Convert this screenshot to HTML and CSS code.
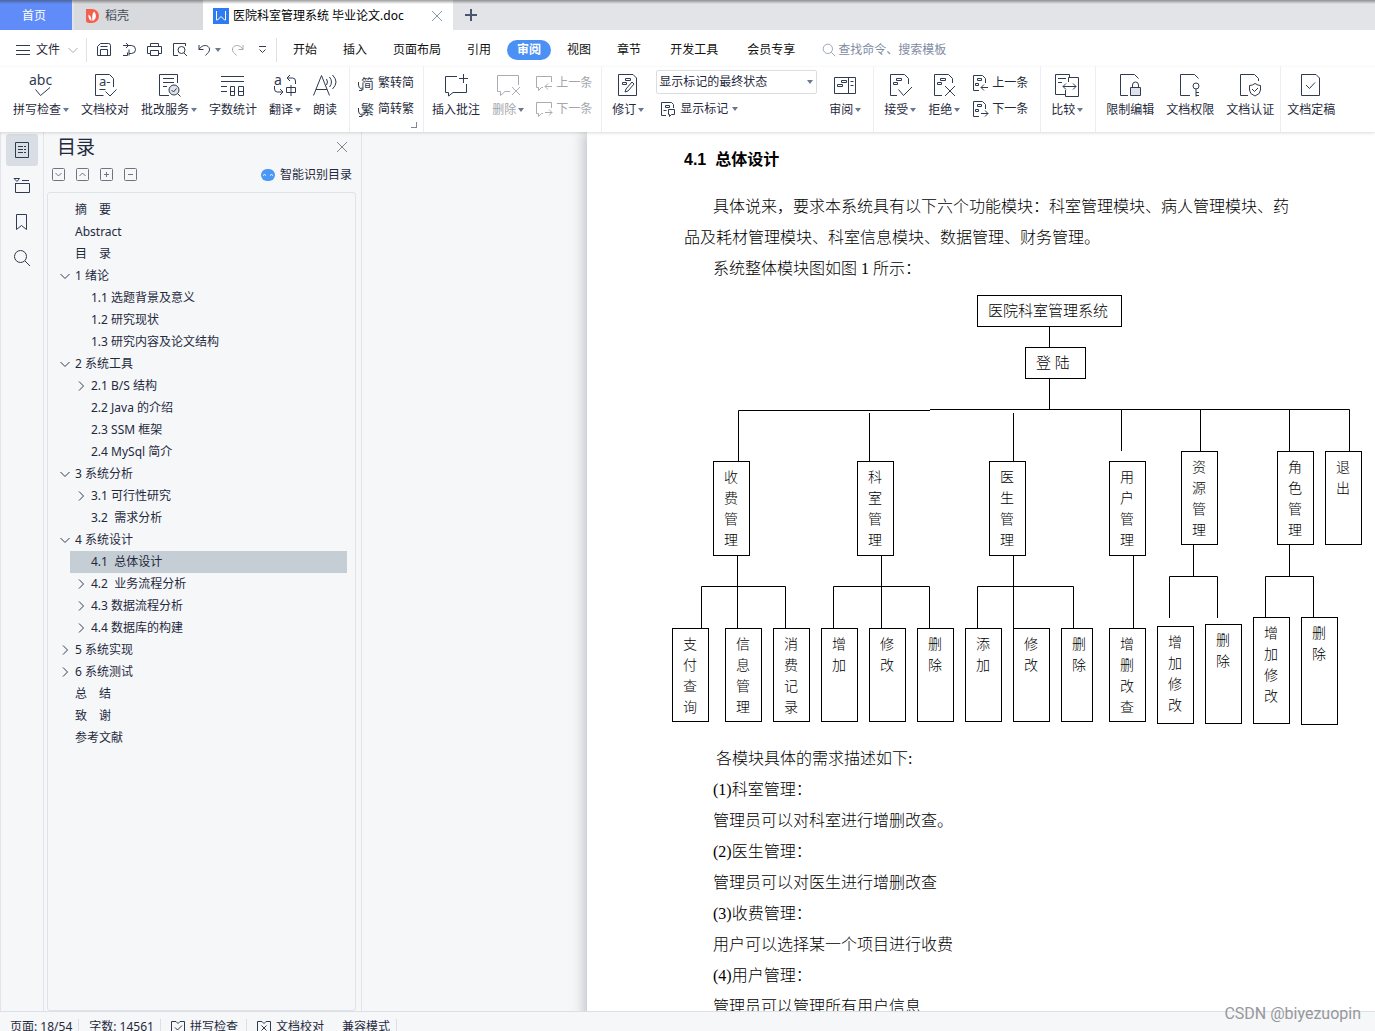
FILE: index.html
```html
<!DOCTYPE html>
<html lang="zh-CN">
<head>
<meta charset="utf-8">
<title>医院科室管理系统 毕业论文.doc</title>
<link rel="stylesheet" href="styles.css">
</head>
<body>
<svg class="defs" aria-hidden="true">
  <symbol id="caret" viewBox="0 0 6 4"><path class="solid" d="M0 0h6L3 4z"/></symbol>
  <symbol id="down" viewBox="0 0 14 14"><path d="M2.500 5l4.500 4.500L11.500 5"/></symbol>
  <symbol id="right" viewBox="0 0 14 14"><path d="M5 2.500L9.500 7 5 11.500"/></symbol>
  <symbol id="cross" viewBox="0 0 12 12"><path d="M1 1l10 10M11 1L1 11"/></symbol>
  <symbol id="magnifier" viewBox="0 0 18 18"><circle cx="7.500" cy="7.500" r="6"/><path d="M12 12l5 5"/></symbol>
</svg>

<header>
  <nav class="tabs" aria-label="文档标签">
    <a class="tab home" href="#">首页</a>
    <a class="tab docer" href="#">
      <svg width="14" height="16" viewBox="0 0 14 16"><path class="red" d="M0 1h6a7 7 0 0 1 0 14H3a3 3 0 0 1-3-3z"/><path class="white" d="M5.500 13C3.500 12 2 10 2.500 6.500 4.500 7.500 5.500 10 5.500 13zM6.500 13C6 9 6 6 8 3.500c3 3 2.500 8-1.500 9.500z"/></svg>
      稻壳</a>
    <a class="tab current" href="#">
      <svg width="16" height="16" viewBox="0 0 16 16"><path class="blue" d="M0 0h16v16H0z"/><path class="w" d="M3.500 3v9h1L8 8.500l3.500 3.500h1V3"/></svg>
      <span>医院科室管理系统 毕业论文.doc</span>
      <svg class="tab-close" width="12" height="12"><use href="#cross"/></svg></a>
    <button class="add" aria-label="新建标签"><svg width="12" height="12" viewBox="0 0 12 12"><path d="M6 0v12M0 6h12"/></svg></button>
  </nav>

  <div class="menu">
    <button class="file"><svg width="14" height="12" viewBox="0 0 14 12"><path d="M0 1.500h14M0 6.500h14M0 10.500h14"/></svg>文件<svg class="faint" width="14" height="14"><use href="#down"/></svg></button>
    <div class="quick">
      <button aria-label="保存"><svg width="15" height="15" viewBox="0 0 15 15"><path d="M.5 4.500l3-3h8a2 2 0 0 1 2 2v10H.5zM3.500 13.500V7.500h7v6M3.500 4.500h7"/></svg></button>
      <button aria-label="输出为PDF"><svg width="15" height="15" viewBox="0 0 15 15"><path d="M1 3.500h8.500a4 4 0 0 1 0 8H7M7 13.500v-6M1 13.500h4.500v-3M4 1l2.500 2.500L4 6"/></svg></button>
      <button aria-label="打印"><svg width="15" height="15" viewBox="0 0 15 15"><path d="M3.500 4V1.500h8V4M3 11.500H.5v-7h14v7H12M3.500 8.500h8v5h-8z"/></svg></button>
      <button aria-label="打印预览"><svg width="16" height="15" viewBox="0 0 16 15"><path d="M6 13.500H1.500v-12h12V4M12 11l3 3"/><circle cx="9.500" cy="8" r="3.500"/></svg></button>
      <button class="undo" aria-label="撤销"><svg width="13" height="14" viewBox="0 0 13 14"><path d="M1 2v4.500h4.500M1 6.500C4 1 11 1.500 11.500 6c.3 3-2 4-4 6.500"/></svg><svg class="caret" width="6" height="4"><use href="#caret"/></svg></button>
      <button class="faint" aria-label="恢复"><svg width="13" height="14" viewBox="0 0 13 14"><path d="M12 2v4.500H7.500M12 6.500C9 1 2 1.500 1.500 6c-.3 3 2 4 4 6.500"/></svg></button>
      <button class="more" aria-label="自定义"><svg width="9" height="9" viewBox="0 0 9 9"><path d="M1 1.500h7M1.500 4.500l3 3 3-3"/></svg></button>
    </div>
    <nav class="sections" aria-label="功能区">
      <a href="#">开始</a><a href="#">插入</a><a href="#">页面布局</a><a href="#">引用</a><a class="active" href="#">审阅</a><a href="#">视图</a><a href="#">章节</a><a class="wide" href="#">开发工具</a><a class="wide" href="#">会员专享</a>
    </nav>
    <label class="search"><svg width="14" height="14"><use href="#magnifier"/></svg><input type="text" placeholder="查找命令、搜索模板" aria-label="查找命令、搜索模板"></label>
  </div>

  <div class="ribbon">
    <div class="group">
      <button class="tool"><svg viewBox="0 0 24 24"><text class="glyph abc" x="0" y="12">abc</text><path d="M6.500 16.500l5 6 9.500-8"/></svg><span>拼写检查<svg class="caret"><use href="#caret"/></svg></span></button>
      <button class="tool"><svg viewBox="0 0 24 24"><path d="M10.500 22.500h-8v-21h14l4 4V14M6.500 16.500h6M12.500 18.500L17 23l6.500-6.500"/><text class="glyph" x="6" y="13">a-</text></svg><span>文档校对</span></button>
      <button class="tool"><svg viewBox="0 0 24 24"><path d="M12 22.500H2.500v-21h18V10M6 5.500h11M6 9.500h11M6 13.500h4M20.500 20.500l3 3"/><circle class="tint" cx="17" cy="17" r="5"/><path d="M14.500 17l2 2 3-3.500"/></svg><span>批改服务<svg class="caret"><use href="#caret"/></svg></span></button>
      <button class="tool"><svg viewBox="0 0 24 24"><path d="M0 3.500h23M0 8.500h23M0 13.500h6M0 18.500h6M9.500 13.500h4v9h-4zM17.500 13.500h5v9h-5zM9.500 18.500h4M17.500 18.500h5"/></svg><span>字数统计</span></button>
      <button class="tool"><svg viewBox="0 0 24 24"><text class="glyph abc" x="1" y="12">a</text><path d="M22.500 11V8a3 3 0 0 0-3-3H14M17 2l-3 3 3 3M1.500 13v3a3 3 0 0 0 3 3H10M7 16l3 3-3 3M13.500 14.500h9v5h-9zM18 12v11"/></svg><span>翻译<svg class="caret"><use href="#caret"/></svg></span></button>
      <button class="tool"><svg viewBox="0 0 24 24"><path d="M.5 22.500l8-20 8 20M3 16.500h11M13.500 6q2 3 0 6M16.500 4q4 5 0 10M19.500 2q7 7 0 14"/></svg><span>朗读</span></button>
    </div>
    <div class="group tight corner">
      <div class="stack">
        <button class="small"><svg viewBox="0 0 16 16"><text class="glyph" x="3" y="13">简</text><path d="M.5 7v3q0 3 3 4M1 15.500h3v-3"/></svg>繁转简</button>
        <button class="small"><svg viewBox="0 0 16 16"><text class="glyph" x="3" y="13">繁</text><path d="M.5 7v3q0 3 3 4M1 15.500h3v-3"/></svg>简转繁</button>
      </div>
    </div>
    <div class="group tight">
      <button class="tool"><svg viewBox="0 0 24 24"><path d="M13 3.500H1.500v16h3v3.500l4.500-3.500h13.500V11M19.500 1v9M15 5.500h9"/></svg><span>插入批注</span></button>
      <button class="tool off" disabled><svg viewBox="0 0 24 24"><path d="M22.500 12V2.500h-21v16h3v4l4.500-4h5M16 14l8 8M24 14l-8 8"/></svg><span>删除<svg class="caret"><use href="#caret"/></svg></span></button>
      <div class="stack">
        <button class="small off" disabled><svg viewBox="0 0 16 16"><path d="M15.500 7V1.500H.5v11h2v3l3-3H7M16 11.500H9M12 8.500l-3 3 3 3"/></svg>上一条</button>
        <button class="small off" disabled><svg viewBox="0 0 16 16"><path d="M15.500 7V1.500H.5v11h2v3l3-3H7M9 11.500h7M13 8.500l3 3-3 3"/></svg>下一条</button>
      </div>
    </div>
    <div class="group">
      <button class="tool"><svg viewBox="0 0 24 24"><path d="M2.500 1.500H17L20.500 5v17.500h-18zM9.500 5.500h5v2h-5zM6.500 9.500h4v2h-4zM9 19l1-3 6-7 2 2-6 7z"/></svg><span>修订<svg class="caret"><use href="#caret"/></svg></span></button>
      <div class="stack pick">
        <div class="combo"><select aria-label="显示状态"><option>显示标记的最终状态</option></select><svg class="caret"><use href="#caret"/></svg></div>
        <button class="small"><svg viewBox="0 0 16 16"><path d="M6 14.500H1.500v-13h10l2 2V7M5.500 4.500h4v2h-4zM3.500 9.500h3M8.500 8.500h6v5h-3l-2 2v-2h-1z"/></svg>显示标记<svg class="caret"><use href="#caret"/></svg></button>
      </div>
      <button class="tool"><svg viewBox="0 0 24 24"><path d="M1.500 4.500h21v16h-21zM15.500 4.500v16M17.500 8.500h3M17.500 12.500h3M8.500 7.500h5v2h-5zM4.500 11.500h5v2h-5z"/></svg><span>审阅<svg class="caret"><use href="#caret"/></svg></span></button>
    </div>
    <div class="group">
      <button class="tool"><svg viewBox="0 0 24 24"><path d="M9 22.500H2.500v-21h14l4 4V11M8.500 5.500h5v2h-5zM5.500 9.500h4v2h-4zM10.500 16.500l5 6L24 14"/></svg><span>接受<svg class="caret"><use href="#caret"/></svg></span></button>
      <button class="tool"><svg viewBox="0 0 24 24"><path d="M10 22.500H2.500v-21h14l4 4V10M8.500 5.500h5v2h-5zM5.500 9.500h4v2h-4zM13 13l10 10M23 13L13 23"/></svg><span>拒绝<svg class="caret"><use href="#caret"/></svg></span></button>
      <div class="stack">
        <button class="small"><svg viewBox="0 0 16 16"><path d="M7 15.500H1.500V.5h9l3 3V8M5.500 3.500h4v2h-4zM3.500 8.500h3v2h-3zM16 12.500H9M12 9.500l-3 3 3 3"/></svg>上一条</button>
        <button class="small"><svg viewBox="0 0 16 16"><path d="M7 15.500H1.500V.5h9l3 3V8M5.500 3.500h4v2h-4zM3.500 8.500h3v2h-3zM9 12.500h7M13 9.500l3 3-3 3"/></svg>下一条</button>
      </div>
    </div>
    <div class="group">
      <button class="tool"><svg viewBox="0 0 24 24"><path d="M14.500 4V1.500H.5v20h10M10.500 17v6.500h13v-19h-10V9M3 5.500h8M3 9.500h4M8 13.500h13M11 10.500l-3 3 3 3M18 10.500l3 3-3 3"/></svg><span>比较<svg class="caret"><use href="#caret"/></svg></span></button>
    </div>
    <div class="group final">
      <button class="tool"><svg viewBox="0 0 24 24"><path d="M10 22.500H2.500v-21h14l4 4"/><path class="tint" d="M12.500 14.500h10v8h-10z"/><path d="M14.500 14.500V12a3 3 0 0 1 6 0v2.500"/></svg><span>限制编辑</span></button>
      <button class="tool"><svg viewBox="0 0 24 24"><path d="M12 22.500H2.500v-21h14l4 4M18 16v7.500M18 19.500h3M18 22.500h3"/><circle cx="18" cy="13" r="3"/></svg><span>文档权限</span></button>
      <button class="tool"><svg viewBox="0 0 24 24"><path d="M10 22.500H2.500v-21h14l4 4V8M17 10.500q3 2 5.500 2V17q0 4-5.500 6-5.500-2-5.500-6v-4.500q3 0 5.500-2zM14 16l2.500 2.500L20 15"/></svg><span>文档认证</span></button>
    </div>
    <div class="group final">
      <button class="tool"><svg viewBox="0 0 24 24"><path d="M2.500 1.500H17L20.500 5v17.500h-18zM7 12l3.500 3.500L16 9.500"/></svg><span>文档定稿</span></button>
    </div>
  </div>
</header>

<main>
  <nav class="rail" aria-label="侧边栏">
    <button class="on" aria-label="目录"><svg viewBox="0 0 18 18"><path d="M2.500 1.500h13v15h-13zM5 5.500h5M11 5.500h2M5 8.500h5M11 8.500h2M5 11.500h5M11 11.500h2"/></svg></button>
    <button aria-label="章节"><svg viewBox="0 0 18 18"><path d="M2.500 6v9.500h14v-9h-14M9 3.500h7M1 1.500h5.500L4 4.500z"/></svg></button>
    <button aria-label="书签"><svg viewBox="0 0 18 18"><path d="M3.500 1.500h10v15l-5-4-5 4z"/></svg></button>
    <button aria-label="查找"><svg viewBox="0 0 18 18"><use href="#magnifier"/></svg></button>
  </nav>

  <aside>
    <div class="panel-head"><h2>目录</h2><button aria-label="关闭"><svg width="12" height="12"><use href="#cross"/></svg></button></div>
    <div class="panel-tools">
      <button aria-label="全部折叠"><svg viewBox="0 0 14 14"><rect x=".5" y=".5" width="12" height="12" rx="1"/><path d="M3.500 5l3 3 3-3"/></svg></button>
      <button aria-label="全部展开"><svg viewBox="0 0 14 14"><rect x=".5" y=".5" width="12" height="12" rx="1"/><path d="M3.500 8l3-3 3 3"/></svg></button>
      <button aria-label="增加级别"><svg viewBox="0 0 14 14"><rect x=".5" y=".5" width="12" height="12" rx="1"/><path d="M4 6.500h5M6.500 4v5"/></svg></button>
      <button aria-label="减少级别"><svg viewBox="0 0 14 14"><rect x=".5" y=".5" width="12" height="12" rx="1"/><path d="M4 6.500h5"/></svg></button>
      <a class="smart" href="#"><svg viewBox="0 0 14 12"><rect class="bot" width="14" height="12" rx="6"/><path class="w" d="M2 6.500q1.500-2 3 0M9 6.500q1.500-2 3 0"/></svg>智能识别目录</a>
    </div>
    <ul class="tree">
      <li><a href="#"><i></i>摘　要</a></li>
      <li><a href="#"><i></i>Abstract</a></li>
      <li><a href="#"><i></i>目　录</a></li>
      <li><a href="#"><svg><use href="#down"/></svg>1 绪论</a>
        <ul>
          <li><a href="#"><i></i>1.1 选题背景及意义</a></li>
          <li><a href="#"><i></i>1.2 研究现状</a></li>
          <li><a href="#"><i></i>1.3 研究内容及论文结构</a></li>
        </ul></li>
      <li><a href="#"><svg><use href="#down"/></svg>2 系统工具</a>
        <ul>
          <li><a href="#"><svg><use href="#right"/></svg>2.1 B/S 结构</a></li>
          <li><a href="#"><i></i>2.2 Java 的介绍</a></li>
          <li><a href="#"><i></i>2.3 SSM 框架</a></li>
          <li><a href="#"><i></i>2.4 MySql 简介</a></li>
        </ul></li>
      <li><a href="#"><svg><use href="#down"/></svg>3 系统分析</a>
        <ul>
          <li><a href="#"><svg><use href="#right"/></svg>3.1 可行性研究</a></li>
          <li><a href="#"><i></i>3.2&nbsp; 需求分析</a></li>
        </ul></li>
      <li><a href="#"><svg><use href="#down"/></svg>4 系统设计</a>
        <ul>
          <li><a class="selected" href="#"><i></i>4.1&nbsp; 总体设计</a></li>
          <li><a href="#"><svg><use href="#right"/></svg>4.2&nbsp; 业务流程分析</a></li>
          <li><a href="#"><svg><use href="#right"/></svg>4.3 数据流程分析</a></li>
          <li><a href="#"><svg><use href="#right"/></svg>4.4 数据库的构建</a></li>
        </ul></li>
      <li><a href="#"><svg><use href="#right"/></svg>5 系统实现</a></li>
      <li><a href="#"><svg><use href="#right"/></svg>6 系统测试</a></li>
      <li><a href="#"><i></i>总　结</a></li>
      <li><a href="#"><i></i>致　谢</a></li>
      <li><a href="#"><i></i>参考文献</a></li>
    </ul>
  </aside>

  <div class="desk">
    <article>
      <h1>4.1&nbsp; 总体设计</h1>
      <p>具体说来，要求本系统具有以下六个功能模块：科室管理模块、病人管理模块、药品及耗材管理模块、科室信息模块、数据管理、财务管理。</p>
      <p>系统整体模块图如图 1 所示：</p>
      <div class="diagram">
        <svg width="700" height="430" viewBox="0 0 700 430">
          <path d="M377.500 32v20M377.500 84v30M66.500 166v-50.500H258M258 114.500h419.500V156M197.500 118v48M341.500 118v48M449.500 114v42M528.500 114v42M617.500 114v42"/>
          <path d="M65.500 261v72M29.500 333v-41.500h84V333M209.500 261v72M161.500 333v-41.500h96V333M341.500 261v72M305.500 333v-41.500h96V333M461.500 261v72M521.500 250v31M497.500 323v-41.500h48V323M617.500 250v31M593.500 322v-40.500h48V322"/>
        </svg>
        <div class="node root">医院科室管理系统</div>
        <div class="node login">登 陆</div>
        <div class="node mid m1">收费管理</div>
        <div class="node mid m2">科室管理</div>
        <div class="node mid m3">医生管理</div>
        <div class="node mid m4">用户管理</div>
        <div class="node mid high m5">资源管理</div>
        <div class="node mid high m6">角色管理</div>
        <div class="node mid high m7">退出</div>
        <div class="node leaf l1">支付查询</div>
        <div class="node leaf l2">信息管理</div>
        <div class="node leaf l3">消费记录</div>
        <div class="node leaf l4">增加</div>
        <div class="node leaf l5">修改</div>
        <div class="node leaf l6">删除</div>
        <div class="node leaf l7">添加</div>
        <div class="node leaf l8">修改</div>
        <div class="node leaf l9">删除</div>
        <div class="node leaf l10">增删改查</div>
        <div class="node leaf l11">增加修改</div>
        <div class="node leaf l12">删除</div>
        <div class="node leaf l13">增加修改</div>
        <div class="node leaf l14">删除</div>
      </div>
      <p class="lead">各模块具体的需求描述如下:</p>
      <p>(1)科室管理：</p>
      <p>管理员可以对科室进行增删改查。</p>
      <p>(2)医生管理：</p>
      <p>管理员可以对医生进行增删改查</p>
      <p>(3)收费管理：</p>
      <p>用户可以选择某一个项目进行收费</p>
      <p>(4)用户管理：</p>
      <p>管理员可以管理所有用户信息</p>
    </article>
  </div>
</main>

<footer>
  <span>页面: 18/54</span>
  <span>字数: 14561</span>
  <button><svg viewBox="0 0 14 14"><path d="M5 1.500H.5v12h13v-12H9L7 3.500zM4 7.500l2.500 2.500L11 5.500"/></svg>拼写检查</button>
  <button class="open"><svg viewBox="0 0 14 14"><path d="M5 1.500H.5v12h13v-12H9L7 3.500zM4.500 5.500l5 5M9.500 5.500l-5 5"/></svg>文档校对</button>
  <span>兼容模式</span>
</footer>
<div class="watermark">CSDN @biyezuopin</div>
</body>
</html>
```
FILE: styles.css
```css
* { box-sizing: border-box; }

body {
  margin: 0;
  height: 100vh;
  display: flex;
  flex-direction: column;
  overflow: hidden;
  background: #f6f7f9;
  color: #1f2a3d;
  font: 12px/16px "Noto Sans", "Noto Sans CJK SC", sans-serif;
}

button, input, select {
  margin: 0;
  padding: 0;
  border: 0;
  background: none;
  color: inherit;
  font: inherit;
}

a { color: inherit; text-decoration: none; }
ul { margin: 0; padding: 0; list-style: none; }
svg { flex: none; display: block; fill: none; stroke: #2f3b50; stroke-width: 1; }
.defs { position: absolute; width: 0; height: 0; }
.solid { fill: #6b7890; stroke: none; }
.caret { width: 6px; height: 4px; }
.faint svg, svg.faint { stroke: #a5abb5; }
.tint { fill: #dfe3e8; }
.w { stroke: #fff; }
.white { fill: #fff; stroke: none; }

/* Document tabs */
.tabs {
  position: relative;
  display: flex;
  height: 30px;
  background: #e2e4e8;
}
.tabs::after {
  content: "";
  position: absolute;
  inset: 0 0 auto;
  height: 4px;
  background: linear-gradient(rgba(60, 60, 60, .5), rgba(60, 60, 60, 0));
}
.tab { display: flex; align-items: center; padding-top: 2px; }
.home {
  width: 72px;
  margin-right: 2px;
  padding-right: 4px;
  justify-content: center;
  background: #5f8cf9;
  color: #fff;
}
.docer {
  width: 129px;
  padding-left: 12px;
  gap: 5px;
  background: #d9dadd;
  color: #454c58;
}
.red { fill: #f4604f; stroke: none; }
.current {
  width: 250px;
  padding: 2px 10px 0;
  gap: 4px;
  background: #fff;
  color: #000;
}
.blue { fill: #2f7cf0; stroke: none; }
.tab-close { margin-left: auto; stroke: #8c98ab; }
.add { width: 36px; display: grid; place-items: center; }
.add svg { stroke: #4a5670; stroke-width: 2; }

/* Menu row */
.menu { display: flex; align-items: center; height: 37px; padding-top: 2px; background: #fff; }
.file {
  display: flex;
  align-items: center;
  gap: 6px;
  height: 24px;
  padding: 0 6px 0 16px;
  border-right: 1px solid #dfe1e5;
}
.quick {
  display: flex;
  align-items: center;
  gap: 10px;
  height: 24px;
  padding: 0 9px 0 10px;
  border-right: 1px solid #dfe1e5;
}
.undo { display: flex; align-items: center; gap: 4px; }
.more { margin-left: 4px; }
.sections { display: flex; gap: 6px; margin-left: 6px; }
.sections a { padding: 2px 10px; border-radius: 10px; color: #111; }
.sections .active { background: #4a90f5; color: #fff; font-weight: bold; }
.sections .wide { margin-left: 3px; }
.search { display: flex; align-items: center; gap: 2px; margin-left: 17px; }
.search svg { stroke: #8290a8; }
.search input { width: 130px; }
.search input::placeholder { color: #7f8ba3; opacity: 1; }

/* Ribbon */
.ribbon {
  display: flex;
  height: 65px;
  padding-left: 3px;
  background: #fff;
  box-shadow: 0 1px 3px rgba(0, 0, 0, .15);
  position: relative;
}
.group {
  display: flex;
  gap: 12px;
  padding: 0 12px 0 10px;
  border-right: 1px solid #eceef1;
}
.group.tight { padding: 0 9px 0 8px; }
.group.final { padding-right: 6px; }
.group.final + .final { padding-left: 6px; border: 0; }
.corner { position: relative; }
.corner::after {
  content: "";
  position: absolute;
  right: 6px;
  bottom: 4px;
  width: 5px;
  height: 5px;
  border: solid #7f8797;
  border-width: 0 1px 1px 0;
}
.tool {
  display: flex;
  flex-direction: column;
  align-items: center;
  gap: 5px;
  padding-top: 6px;
  white-space: nowrap;
}
.tool > svg { width: 24px; height: 24px; overflow: visible; }
.tool span { display: flex; align-items: center; gap: 2px; }
.glyph { fill: #2f3b50; stroke: none; font-size: 13px; }
.abc { font-size: 14px; }
.stack { display: flex; flex-direction: column; gap: 8px; padding-top: 7px; }
.stack.pick { gap: 6px; padding-top: 3px; }
.small { display: flex; align-items: center; gap: 4px; height: 18px; white-space: nowrap; }
.small > svg:first-child { width: 16px; height: 16px; overflow: visible; }
.pick .small { padding-left: 4px; }
.off { color: #a3a6ac; }
.off svg { stroke: #a9acb2; }
.combo { position: relative; width: 161px; }
.combo select {
  width: 100%;
  height: 24px;
  padding-left: 2px;
  border: 1px solid #dadde2;
  border-radius: 2px;
  appearance: none;
}
.combo .caret { position: absolute; right: 4px; top: 10px; pointer-events: none; }

/* Work area */
main { flex: 1; min-height: 0; display: flex; }
.rail {
  display: flex;
  flex-direction: column;
  gap: 4px;
  width: 44px;
  padding: 2px 5px;
  border: solid #e2e4e9;
  border-width: 0 1px;
}
.rail button { width: 32px; height: 32px; display: grid; place-items: center; border-radius: 3px; }
.rail svg { width: 18px; height: 18px; }
.rail .on { background: #d9dde4; }

aside {
  display: flex;
  flex-direction: column;
  width: 318px;
  padding: 0 5px 0 3px;
  border-right: 1px solid #e2e4e9;
}
.panel-head { display: flex; justify-content: space-between; align-items: center; height: 30px; padding: 0 8px 0 10px; }
.panel-head h2 { margin: 0; font-size: 19px; line-height: 28px; font-weight: normal; }
.panel-head svg { stroke: #7e8591; }
.panel-tools { display: flex; align-items: center; gap: 10px; height: 24px; margin-bottom: 6px; padding: 1px 4px 0 5px; }
.panel-tools svg { width: 14px; height: 14px; stroke: #6f7580; }
.smart { display: flex; align-items: center; gap: 5px; margin-left: auto; }
.smart .bot { fill: #4a97f5; stroke: none; }
.tree {
  flex: 1;
  padding: 6px 8px 0 6px;
  border: 1px solid #dfe2e9;
  border-radius: 3px;
}
.tree ul { margin-left: 16px; }
.tree a { display: flex; align-items: center; gap: 3px; height: 22px; padding-left: 4px; }
.tree i, .tree svg { flex: none; width: 14px; height: 14px; }
.tree .selected { background: #c5cdd5; }

.desk { flex: 1; min-width: 0; padding-left: 225px; overflow: hidden; }
article {
  min-height: 100%;
  padding: 18px 0 0 97px;
  background: #fff;
  box-shadow: -3px 0 12px rgba(60, 70, 80, .3);
  color: #000;
  font: 300 16px/31px "Liberation Serif", "Noto Sans CJK SC", serif;
}
h1 { margin: 0 0 21px; font: bold 16px/20px "Liberation Sans", "Noto Sans CJK SC", sans-serif; }
article p { max-width: 606px; margin: 0; text-indent: 29px; }
article .lead { text-indent: 32px; }

/* Module diagram: a free canvas with boxes joined by lines */
.diagram { position: relative; width: 691px; height: 430px; margin: 11px 0 18px -12px; }
.diagram svg { stroke: #000; }
.node {
  position: absolute;
  width: 37px;
  padding: 5px 6px 0 10px;
  border: 1px solid #000;
  font-size: 14px;
  line-height: 21px;
  word-break: break-all;
}
.root, .login { height: 32px; padding-right: 0; font-size: 15px; white-space: nowrap; }
.root { left: 305px; top: 0; width: 145px; }
.login { left: 353px; top: 52px; width: 61px; }
.mid { top: 166px; height: 95px; }
.high { top: 156px; height: 94px; }
.m1 { left: 41px; }
.m2 { left: 185px; }
.m3 { left: 317px; }
.m4 { left: 437px; }
.m5 { left: 509px; }
.m6 { left: 605px; }
.m7 { left: 653px; }
.leaf { top: 333px; height: 94px; }
.l1 { left: 0; }
.l2 { left: 53px; }
.l3 { left: 101px; }
.l4 { left: 149px; }
.l5 { left: 197px; }
.l6 { left: 245px; }
.l7 { left: 293px; }
.l8 { left: 341px; }
.l9 { left: 389px; width: 32px; padding-right: 0; }
.l10 { left: 437px; }
.l11 { left: 485px; top: 331px; height: 98px; }
.l12 { left: 533px; top: 329px; height: 100px; }
.l13 { left: 581px; top: 322px; height: 107px; }
.l14 { left: 629px; top: 322px; height: 108px; }

/* Status bar */
footer {
  display: flex;
  height: 20px;
  padding-top: 7px;
  border-top: 1px solid #dcdfe5;
  overflow: hidden;
}
footer > * { display: flex; flex: none; align-items: center; gap: 5px; height: 16px; padding: 0 6px 0 10px; border-right: 1px solid #dcdfe5; }
footer button { padding-right: 8px; }
footer .open { border-right: 0; }
footer svg { width: 14px; height: 14px; }
.watermark {
  position: absolute;
  right: 14px;
  bottom: 8px;
  color: #96989b;
  font: 16px/18px Roboto, "Liberation Sans", sans-serif;
}
```
